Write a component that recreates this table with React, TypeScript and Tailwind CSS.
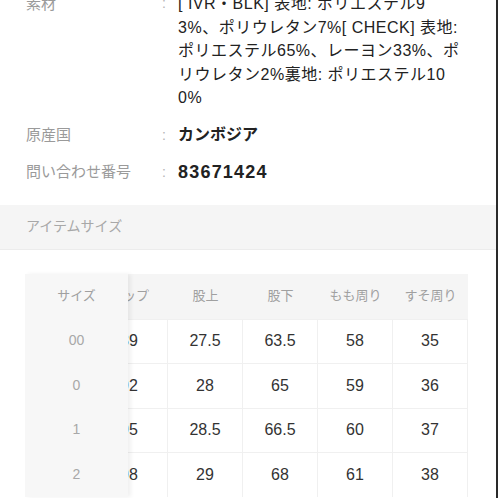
const font = { fontFamily: '"Liberation Sans", "Noto Sans CJK JP", sans-serif' };

const rows = [
  { size: "00", hip: "89", rise: "27.5", inseam: "63.5", thigh: "58", hem: "35" },
  { size: "0", hip: "92", rise: "28", inseam: "65", thigh: "59", hem: "36" },
  { size: "1", hip: "95", rise: "28.5", inseam: "66.5", thigh: "60", hem: "37" },
  { size: "2", hip: "98", rise: "29", inseam: "68", thigh: "61", hem: "38" },
];

const heads = ["ヒップ", "股上", "股下", "もも周り", "すそ周り"];

// wrapped exactly as the product page breaks them
const material = [
  "[ IVR・BLK] 表地: ポリエステル9",
  "3%、ポリウレタン7%[ CHECK] 表地:",
  "ポリエステル65%、レーヨン33%、ポ",
  "リウレタン2%裏地: ポリエステル10",
  "0%",
];

const Spec = ({ label, children }: { label: string; children: React.ReactNode }) => (
  <div className="flex items-center">
    <span className="w-[136px] text-[15px] text-[#9a9a9a]">{label}</span>
    <span className="w-[16px] text-[14px] text-[#b5b5b5]">:</span>
    {children}
  </div>
);

export default function App() {
  return (
    <div className="flex h-[498px] w-[498px] overflow-hidden bg-white" style={font}>
      <main className="flex w-[496px] flex-col">
        <section className="-mt-[8px] flex flex-col pl-[26px]">
          <div className="flex leading-[23.5px]">
            <span className="w-[136px] text-[15px] text-[#9a9a9a]">素材</span>
            <span className="w-[16px] text-[14px] text-[#b5b5b5]">:</span>
            <div className="flex flex-col text-[16px] tracking-[0.5px] text-[#222]">
              {material.map((l) => (
                <span key={l} className="whitespace-nowrap">
                  {l}
                </span>
              ))}
            </div>
          </div>
          <div className="mt-[13px] flex flex-col gap-[13px] leading-[24px]">
            <Spec label="原産国">
              <span className="text-[16px] font-bold text-[#222]">カンボジア</span>
            </Spec>
            <Spec label="問い合わせ番号">
              <span className="text-[18px] font-semibold tracking-[1.2px] text-[#222]">83671424</span>
            </Spec>
          </div>
        </section>

        <div className="mt-[21px] flex h-[45px] items-center border-b border-[#ececec] bg-[#f5f5f5] pl-[26px] text-[14px] text-[#a8a8a8]">
          アイテムサイズ
        </div>

        <div className="ml-[25px] mt-[24px] flex w-[443px]">
          <div className="z-10 flex w-[103px] flex-col bg-[#f7f7f7] shadow-[3px_0_4px_rgba(0,0,0,0.06)]">
            <div className="flex h-[45px] items-center justify-center text-[13px] text-[#a0a0a0]">サイズ</div>
            {rows.map((r) => (
              <div key={r.size} className="flex h-[44.5px] items-center justify-center text-[14px] text-[#a8a8a8]">
                {r.size}
              </div>
            ))}
          </div>
          <div className="flex-1 overflow-hidden">
            <div className="-ml-[37px] flex w-[377px] flex-col">
              <div className="grid h-[45px] grid-cols-[77px_75px_75px_75px_75px] bg-[#f5f5f5]">
                {heads.map((h) => (
                  <div key={h} className="flex items-center justify-center text-[13px] text-[#a0a0a0]">
                    {h}
                  </div>
                ))}
              </div>
              {rows.map((r) => (
                <div key={r.size} className="grid h-[44.5px] grid-cols-[77px_75px_75px_75px_75px] border-t border-[#f0f0f0]">
                  {[r.hip, r.rise, r.inseam, r.thigh, r.hem].map((v, i) => (
                    <div
                      key={i}
                      className="flex items-center justify-center border-r border-[#f0f0f0] text-[16px] text-[#333]"
                    >
                      {v}
                    </div>
                  ))}
                </div>
              ))}
            </div>
          </div>
        </div>
      </main>
      <div className="w-[2px] bg-[#2a2a2a]" />
    </div>
  );
}
